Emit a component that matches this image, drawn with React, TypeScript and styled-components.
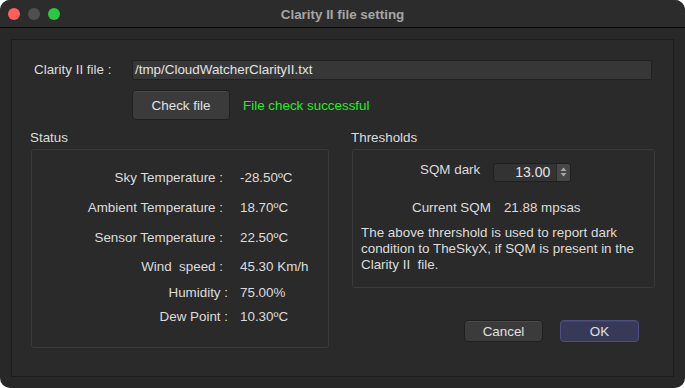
import { FC, Fragment } from 'react';
import styled, { createGlobalStyle } from 'styled-components';

const GlobalStyle = createGlobalStyle`
  html, body {
    margin: 0;
    padding: 0;
    background: #ffffff;
  }
  body {
    font-family: 'Liberation Sans', Arial, sans-serif;
    font-size: 13.4px;
    color: #dcdcdc;
  }
`;

const Window = styled.div`
  width: 685px;
  height: 388px;
  border-radius: 10px;
  overflow: hidden;
  background: #282828;
  display: flex;
  flex-direction: column;
`;

const TitleBar = styled.div`
  height: 27px;
  flex-shrink: 0;
  background: #2c2c2c;
  border-bottom: 1px solid #050505;
  position: relative;
  display: flex;
  align-items: center;
  justify-content: center;
`;

const Lights = styled.div`
  position: absolute;
  left: 8px;
  top: 8px;
  display: flex;
  gap: 8px;
`;

const Light = styled.span<{ $color: string }>`
  width: 12px;
  height: 12px;
  border-radius: 50%;
  background: ${(p) => p.$color};
`;

const Title = styled.div`
  font-weight: bold;
  font-size: 13.4px;
  color: #a6a6a6;
  padding-top: 1px;
`;

const Body = styled.div`
  flex: 1;
  display: flex;
  padding: 11px;
`;

const Frame = styled.div`
  flex: 1;
  border: 1px solid #1c1c1c;
  background: #2a2a2a;
  display: flex;
  flex-direction: column;
  padding-top: 20px;
`;

const FileRow = styled.div`
  display: flex;
  align-items: center;
  height: 19px;
  padding-left: 22px;
`;

const FieldLabel = styled.span`
  width: 98px;
`;

const PathInput = styled.div`
  width: 516px;
  height: 18px;
  background: #373737;
  border: 1px solid #202020;
  border-radius: 2px;
  display: flex;
  align-items: center;
  padding-left: 2px;
  color: #e2e2e2;
`;

const CheckRow = styled.div`
  display: flex;
  align-items: center;
  gap: 13px;
  margin-top: 11px;
  padding-left: 120px;
`;

const Button = styled.div<{ $primary?: boolean; $w: number; $h: number }>`
  width: ${(p) => p.$w}px;
  height: ${(p) => p.$h}px;
  box-sizing: border-box;
  border-radius: 4px;
  display: flex;
  align-items: center;
  justify-content: center;
  color: #e0e0e0;
  background: ${(p) => (p.$primary ? '#363957' : '#3b3b3b')};
  border: 1px solid ${(p) => (p.$primary ? '#4b4f82' : '#1f1f1f')};
  box-shadow: inset 0 1px 0 ${(p) => (p.$primary ? '#40446a' : '#4a4a4a')};
`;

const Success = styled.span`
  color: #22ee22;
`;

const Groups = styled.div`
  display: flex;
  margin-top: 11px;
  padding-left: 18px;
  gap: 22px;
`;

const Group = styled.div<{ $w: number }>`
  width: ${(p) => p.$w}px;
  display: flex;
  flex-direction: column;
`;

const GroupTitle = styled.div`
  height: 14px;
  line-height: 14px;
  margin-bottom: 4px;
`;

const GroupBox = styled.div<{ $h: number }>`
  height: ${(p) => p.$h}px;
  box-sizing: border-box;
  border: 1px solid #3a3a3a;
  border-radius: 3px;
  margin-left: 1px;
`;

const StatusGrid = styled.div`
  display: grid;
  grid-template-columns: 196px auto;
  column-gap: 12px;
  padding-top: 12px;
`;

const StatLabel = styled.div<{ $h: number; $inset: number }>`
  height: ${(p) => p.$h}px;
  display: flex;
  align-items: center;
  justify-content: flex-end;
  padding-right: ${(p) => p.$inset}px;
  white-space: pre;
`;

const StatValue = styled.div<{ $h: number }>`
  height: ${(p) => p.$h}px;
  display: flex;
  align-items: center;
  white-space: pre;
`;

const ThreshRow = styled.div<{ $pl: number; $mt: number; $h: number }>`
  display: flex;
  align-items: center;
  gap: 13px;
  height: ${(p) => p.$h}px;
  margin-top: ${(p) => p.$mt}px;
  padding-left: ${(p) => p.$pl}px;
`;

const Spin = styled.div`
  width: 78px;
  height: 19px;
  box-sizing: border-box;
  margin-top: 5px;
  display: flex;
  border: 1px solid #1f1f1f;
  border-radius: 3px;
  background: #333333;
  overflow: hidden;
`;

const SpinValue = styled.div`
  flex: 1;
  display: flex;
  align-items: center;
  justify-content: flex-end;
  padding-right: 6px;
  color: #e4e4e4;
  font-size: 14px;
`;

const SpinArrows = styled.div`
  width: 13px;
  background: #474747;
  border-left: 1px solid #2a2a2a;
  display: flex;
  align-items: center;
  justify-content: center;
`;

const Note = styled.p`
  margin: 9px 0 0 8px;
  width: 285px;
  line-height: 16px;
`;

const Actions = styled.div`
  display: flex;
  gap: 17px;
  margin-top: 32px;
  padding-left: 113px;
`;

const stats: { label: string; value: string; h: number; inset: number }[] = [
  { label: 'Sky Temperature :', value: '-28.50ºC', h: 30, inset: 5 },
  { label: 'Ambient Temperature :', value: '18.70ºC', h: 30, inset: 5 },
  { label: 'Sensor Temperature :', value: '22.50ºC', h: 30, inset: 5 },
  { label: 'Wind  speed :', value: '45.30 Km/h', h: 28, inset: 5 },
  { label: 'Humidity :', value: '75.00%', h: 24, inset: 0 },
  { label: 'Dew Point :', value: '10.30ºC', h: 24, inset: 0 },
];

const App: FC = () => {
  return (
    <>
      <GlobalStyle />
      <Window>
        <TitleBar>
          <Lights>
            <Light $color='#fe5f57' />
            <Light $color='#4f4f4f' />
            <Light $color='#29c840' />
          </Lights>
          <Title>Clarity II file setting</Title>
        </TitleBar>
        <Body>
          <Frame>
            <FileRow>
              <FieldLabel>Clarity II file :</FieldLabel>
              <PathInput>/tmp/CloudWatcherClarityII.txt</PathInput>
            </FileRow>
            <CheckRow>
              <Button $w={98} $h={30}>
                Check file
              </Button>
              <Success>File check successful</Success>
            </CheckRow>
            <Groups>
              <Group $w={299}>
                <GroupTitle>Status</GroupTitle>
                <GroupBox $h={199}>
                  <StatusGrid>
                    {stats.map((s) => (
                      <Fragment key={s.label}>
                        <StatLabel $h={s.h} $inset={s.inset}>
                          {s.label}
                        </StatLabel>
                        <StatValue $h={s.h}>{s.value}</StatValue>
                      </Fragment>
                    ))}
                  </StatusGrid>
                </GroupBox>
              </Group>
              <Group $w={304}>
                <GroupTitle>Thresholds</GroupTitle>
                <GroupBox $h={139}>
                  <ThreshRow $pl={67} $mt={10} $h={19}>
                    <span>SQM dark</span>
                    <Spin>
                      <SpinValue>13.00</SpinValue>
                      <SpinArrows>
                        <svg width='7' height='12' viewBox='0 0 7 12'>
                          <path d='M3.5 1.5 L6.5 5 H0.5 Z' fill='#a8a8a8' />
                          <path d='M3.5 10.5 L6.5 7 H0.5 Z' fill='#a8a8a8' />
                        </svg>
                      </SpinArrows>
                    </Spin>
                  </ThreshRow>
                  <ThreshRow $pl={59} $mt={19} $h={18}>
                    <span>Current SQM</span>
                    <span>21.88 mpsas</span>
                  </ThreshRow>
                  <Note>
                    The above thrershold is used to report dark condition to TheSkyX, if SQM is present in the
                    Clarity II&nbsp; file.
                  </Note>
                </GroupBox>
                <Actions>
                  <Button $w={79} $h={22}>
                    Cancel
                  </Button>
                  <Button $w={79} $h={22} $primary>
                    OK
                  </Button>
                </Actions>
              </Group>
            </Groups>
          </Frame>
        </Body>
      </Window>
    </>
  );
};

export default App;
